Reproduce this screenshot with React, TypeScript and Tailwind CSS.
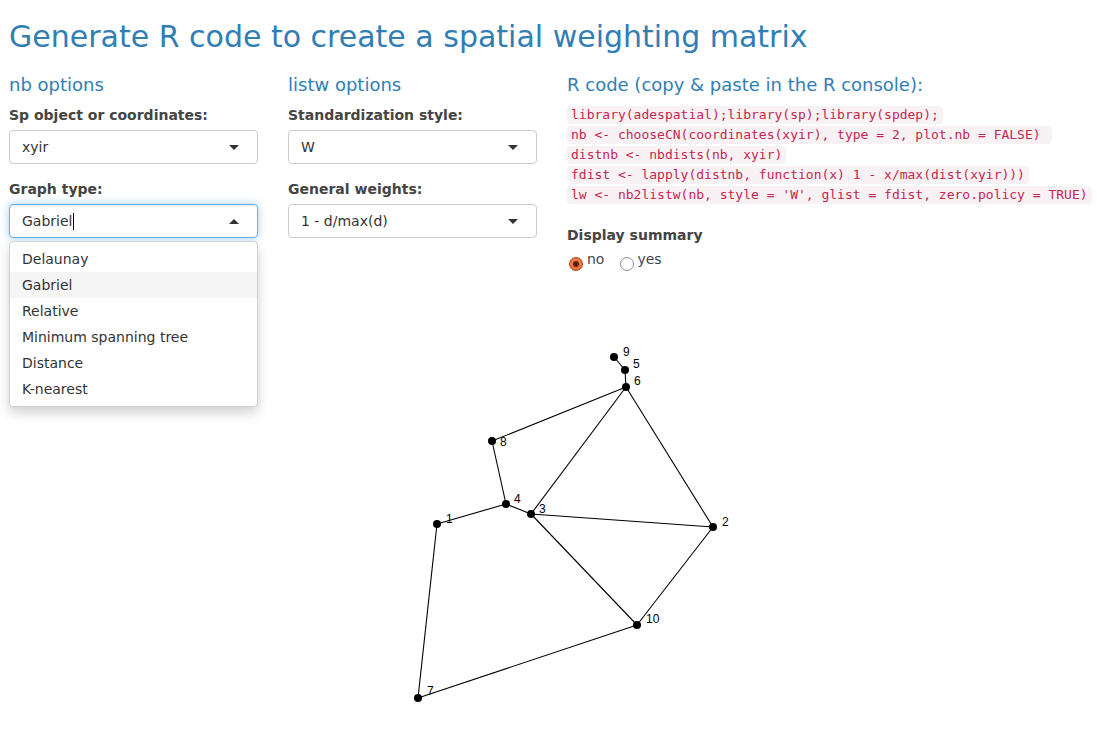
import React from "react";

const sans = { fontFamily: '"DejaVu Sans", "Liberation Sans", sans-serif' };
const mono = { fontFamily: '"DejaVu Sans Mono", "Liberation Mono", monospace' };

const codeLines = [
  "library(adespatial);library(sp);library(spdep);",
  "nb <- chooseCN(coordinates(xyir), type = 2, plot.nb = FALSE) ",
  "distnb <- nbdists(nb, xyir)",
  "fdist <- lapply(distnb, function(x) 1 - x/max(dist(xyir)))",
  "lw <- nb2listw(nb, style = 'W', glist = fdist, zero.policy = TRUE)",
];

const graphOptions = ["Delaunay", "Gabriel", "Relative", "Minimum spanning tree", "Distance", "K-nearest"];

// node positions in page coordinates, label positions (left, center y)
const nodes: { id: string; x: number; y: number; lx: number; ly: number }[] = [
  { id: "1", x: 437, y: 524, lx: 446, ly: 519 },
  { id: "2", x: 713, y: 527, lx: 722, ly: 522 },
  { id: "3", x: 531, y: 514, lx: 539, ly: 509 },
  { id: "4", x: 506, y: 504, lx: 514, ly: 499 },
  { id: "5", x: 625, y: 370, lx: 633, ly: 364 },
  { id: "6", x: 626, y: 387, lx: 634, ly: 381 },
  { id: "7", x: 418, y: 698, lx: 427, ly: 691 },
  { id: "8", x: 492, y: 441, lx: 500, ly: 442 },
  { id: "9", x: 614, y: 357, lx: 623, ly: 352 },
  { id: "10", x: 637, y: 625, lx: 646, ly: 619 },
];

const edges: [string, string][] = [
  ["9", "5"], ["5", "6"], ["6", "8"], ["6", "3"], ["6", "2"], ["8", "4"], ["4", "3"],
  ["4", "1"], ["3", "2"], ["3", "10"], ["2", "10"], ["1", "7"], ["7", "10"],
];

const PLOT_TOP = 290;

function Caret({ up }: { up?: boolean }) {
  return (
    <svg width="10" height="5" viewBox="0 0 10 5" className="absolute right-[18px] top-[14px]">
      <path d={up ? "M0 5 L5 0 L10 5 Z" : "M0 0 L10 0 L5 5 Z"} fill="#333" />
    </svg>
  );
}

function SelectBox({ value, focused, children }: { value: string; focused?: boolean; children?: React.ReactNode }) {
  return (
    <div className="relative w-[249px]">
      <div
        className={
          focused
            ? "relative h-[34px] rounded-[4px] border border-[#66afe9] bg-white pl-[12px] flex items-center text-[14px] text-[#333] shadow-[inset_0_1px_1px_rgba(0,0,0,0.075),0_0_8px_rgba(102,175,233,0.6)]"
            : "relative h-[34px] rounded-[4px] border border-[#ccc] bg-white pl-[12px] flex items-center text-[14px] text-[#333]"
        }
      >
        <span>{value}</span>
        {focused && <span className="ml-[1px] w-[1px] h-[17px] bg-black" />}
        <Caret up={focused} />
      </div>
      {children}
    </div>
  );
}

function Label({ children }: { children: React.ReactNode }) {
  return <div className="text-[14px] leading-[20px] font-bold text-[#444] mb-[5px]">{children}</div>;
}

function Heading({ children }: { children: React.ReactNode }) {
  return <h4 className="text-[18px] leading-[20px] text-[#317eb5] mb-[10px]">{children}</h4>;
}

export default function App() {
  const byId = Object.fromEntries(nodes.map((n) => [n.id, n]));

  return (
    <div className="w-[1097px] h-[748px] bg-white overflow-hidden relative" style={sans}>
      <div className="pl-[9px]">
        <h2 className="pt-[20px] text-[30px] leading-[33px] text-[#317eb5]">
          Generate R code to create a spatial weighting matrix
        </h2>

        <div className="grid grid-cols-[279px_279px_1fr] mt-[22px]">
          {/* nb options */}
          <div>
            <Heading>nb options</Heading>
            <Label>Sp object or coordinates:</Label>
            <SelectBox value="xyir" />
            <div className="h-[15px]" />
            <Label>Graph type:</Label>
            <SelectBox value="Gabriel" focused>
              <div className="absolute z-10 left-0 top-[37px] w-[249px] bg-white border border-[#d0d0d0] rounded-[4px] py-[4px] shadow-[0_6px_12px_rgba(0,0,0,0.175)]">
                {graphOptions.map((o) => (
                  <div
                    key={o}
                    className={
                      o === "Gabriel"
                        ? "h-[26px] pl-[12px] flex items-center text-[14px] text-[#333] bg-[#f5f5f5]"
                        : "h-[26px] pl-[12px] flex items-center text-[14px] text-[#333]"
                    }
                  >
                    {o}
                  </div>
                ))}
              </div>
            </SelectBox>
          </div>

          {/* listw options */}
          <div>
            <Heading>listw options</Heading>
            <Label>Standardization style:</Label>
            <SelectBox value="W" />
            <div className="h-[15px]" />
            <Label>General weights:</Label>
            <SelectBox value="1 - d/max(d)" />
          </div>

          {/* R code */}
          <div>
            <Heading>R code (copy &amp; paste in the R console):</Heading>
            <div className="flex flex-col items-start">
              {codeLines.map((l, i) => (
                <div key={i} className="h-[20px] flex items-center">
                  <code
                    className="whitespace-pre text-[13px] leading-[16px] px-[4px] py-[1px] rounded-[4px] bg-[#f9f2f4] text-[#c7254e]"
                    style={mono}
                  >
                    {l}
                  </code>
                </div>
              ))}
            </div>
            <div className="mt-[20px] text-[14px] leading-[20px] font-bold text-[#444]">Display summary</div>
            <div className="mt-[6px] flex items-start gap-[16px] text-[14px] text-[#444]">
              <div className="flex items-start">
                <span className="mt-[6px] ml-[2px] w-[14px] h-[14px] rounded-full border border-[#b94a1a] bg-[radial-gradient(circle_at_50%_40%,#f5895a,#e4622c)] flex items-center justify-center">
                  <span className="w-[6px] h-[6px] rounded-full bg-[#5a2410]" />
                </span>
                <span className="ml-[4px] leading-[16px]">no</span>
              </div>
              <div className="flex items-start">
                <span className="mt-[6px] w-[14px] h-[14px] rounded-full border border-[#8e8e8e] bg-white" />
                <span className="ml-[3px] leading-[16px]">yes</span>
              </div>
            </div>
          </div>
        </div>
      </div>

      {/* neighbourhood graph */}
      <svg
        className="absolute left-0"
        style={{ top: PLOT_TOP }}
        width="1097"
        height="440"
        viewBox={`0 ${PLOT_TOP} 1097 440`}
      >
        {edges.map(([a, b], i) => (
          <line key={i} x1={byId[a].x} y1={byId[a].y} x2={byId[b].x} y2={byId[b].y} stroke="#000" strokeWidth="1.1" />
        ))}
        {nodes.map((n) => (
          <g key={n.id}>
            <circle cx={n.x} cy={n.y} r="4" fill="#000" />
            <text
              x={n.lx}
              y={n.ly + 4.3}
              fontSize="12"
              fill="#000"
              style={{ fontFamily: '"Liberation Sans", Arial, sans-serif' }}
            >
              {n.id}
            </text>
          </g>
        ))}
      </svg>
    </div>
  );
}
